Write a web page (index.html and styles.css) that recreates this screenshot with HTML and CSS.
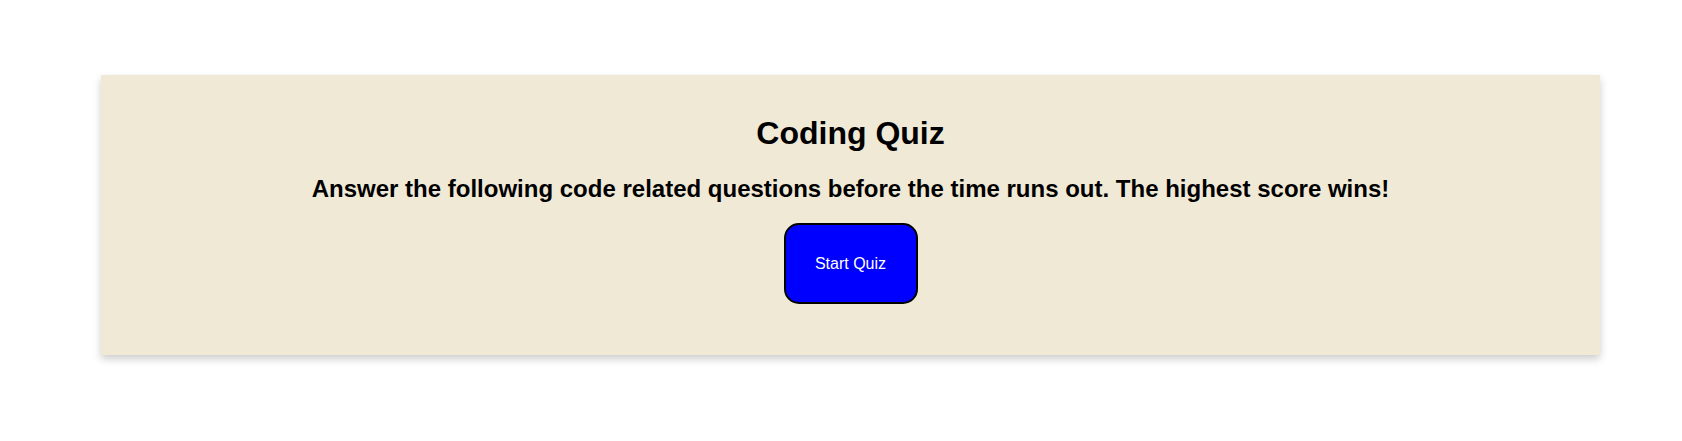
FILE: index.html
```html
<!DOCTYPE html>
<html lang="en">
<head>
<meta charset="utf-8">
<title>Coding Quiz</title>
<link rel="stylesheet" href="styles.css">
</head>
<body>
<main class="card">
  <h1 class="title">Coding Quiz</h1>
  <h2 class="subtitle">Answer the following code related questions before the time runs out. The highest score wins!</h2>
  <button class="start-btn" type="button">Start Quiz</button>
</main>
</body>
</html>
```
FILE: styles.css
```css
html, body {
  margin: 0;
  padding: 0;
  background: #ffffff;
  font-family: "Liberation Sans", Arial, sans-serif;
}

body {
  padding: 75px 0 40px 101px;
}

.card {
  box-sizing: border-box;
  width: 1499px;
  height: 280px;
  padding-top: 40px;
  background: #f0e9d6;
  box-shadow: 0 4px 8px 0 rgba(0, 0, 0, 0.2);
  display: flex;
  flex-direction: column;
  align-items: center;
  color: #000000;
}

.title {
  margin: 0;
  font-size: 32px;
  line-height: 37px;
  font-weight: bold;
}

.subtitle {
  margin: 23px 0 0;
  font-size: 24px;
  line-height: 28px;
  font-weight: bold;
}

.start-btn {
  margin-top: 20px;
  box-sizing: border-box;
  width: 134px;
  height: 81px;
  background: #0000ff;
  color: #ffffff;
  border: 2px solid #000000;
  border-radius: 15px;
  font-family: "Liberation Sans", Arial, sans-serif;
  font-size: 16px;
  padding: 0;
  cursor: pointer;
}
```
